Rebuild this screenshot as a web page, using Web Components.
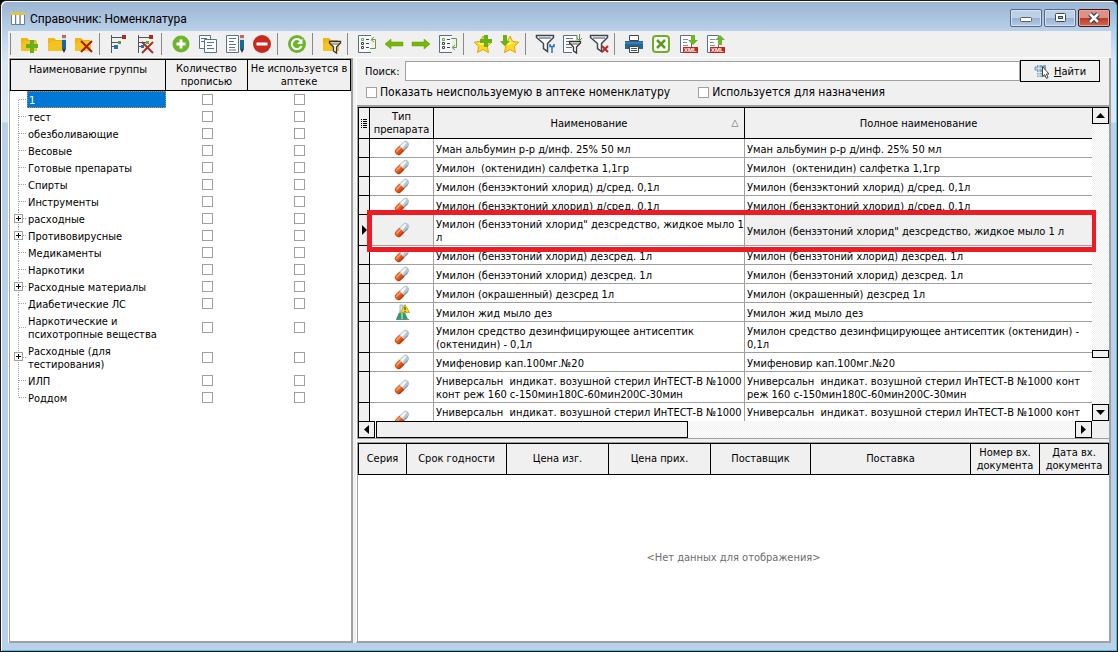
<!DOCTYPE html>
<html lang="ru">
<head>
<meta charset="utf-8">
<title>Справочник: Номенклатура</title>
<style>
  html, body { margin: 0; height: 100%; }
  body { font: 11px/13px "DejaVu Sans Condensed", "DejaVu Sans", sans-serif; color: #000; background: #000; }
</style>
</head>
<body>
<app-window>
  <title-bar slot="title">Справочник: Номенклатура</title-bar>
  <tool-bar slot="tools"></tool-bar>
  <group-tree slot="side"></group-tree>
  <search-panel slot="main"></search-panel>
  <drug-grid slot="main"></drug-grid>
  <lot-grid slot="main">&lt;Нет данных для отображения&gt;</lot-grid>
</app-window>

<script>
const define = (name, html, setup) => customElements.define(name, class extends HTMLElement {
  constructor() {
    super();
    this.attachShadow({ mode: 'open' });
    const t = document.createElement('template');
    t.innerHTML = typeof html === 'function' ? html(this) : html;
    this.shadowRoot.append(t.content.cloneNode(true));
    if (setup) setup(this);
  }
});

/* ---------- toolbar glyphs, 24 x 22 ---------- */
const svg = (body, w = 24, h = 22) =>
  `<svg width="${w}" height="${h}" viewBox="0 0 ${w} ${h}" aria-hidden="true">${body}</svg>`;
const folder = '<path d="M3 5h6l2 2h7v2H7l-1 9H3z" fill="#e9b010"/><path d="M6 8h13v10H3V10h3z" fill="#f2c321"/><path d="M3 5h6l2 3H6v2H3z" fill="#edb716"/>';
const pencil = (x = 17) => `<path d="M${x} 2h4v3h-4z" fill="#c0685c"/><path d="M${x} 5h4v2h-4z" fill="#d8dde0"/><path d="M${x} 7h4v9h-4z" fill="#1d64a0"/><path d="M${x} 16h4l-2 4z" fill="#23384a"/>`;
const sheet = (x, y, w, h) => `<path d="M${x}.5 ${y}.5h${w}v${h}h-${w}z" fill="#fff" stroke="#5a7485"/>`;
const funnel = (s = '#3c4650') => `<path d="M3.500 2.500h17v2l-6 6v8l-4-3v-5l-7-6z" fill="#fff" stroke="${s}" stroke-width="1.500"/><path d="M6 5h12" stroke="${s}"/>`;
const smallFunnel = '<path d="M9.500 8.500h11v1.500l-4 4v6l-3-2v-4l-4-4z" fill="#fff" stroke="#333" stroke-width="1.300"/><path d="M11 11h8" stroke="#555"/>';
const listBox = '<path d="M16 2.500H3.500v17H16" fill="#f7f9fa" stroke="#54708a"/><path d="M6.500 5.500h2v2h-2z" fill="none" stroke="#6fae2a"/><path d="M6.500 9.500h2v2h-2zM6.500 13.500h2v2h-2z" fill="none" stroke="#444"/><path d="M11 6.500h3M11 10.500h3M11 14.500h3" stroke="#444"/>';
const star = '<path d="M12 3l2.600 5.400 6.200.800-4.500 4.200 1.200 6.200-5.500-3-5.500 3 1.200-6.200L3.200 9.200l6.200-.800z" fill="#ffd91c" stroke="#e0a414"/><path d="M12 5l1.500 4.500 4.500.500-8 2-4-2 4.500-.500z" fill="#fff27a"/>';
const xml = '<path d="M4.500 2.500h11v17h-11z" fill="#fff" stroke="#54708a"/><path d="M7 6.500h5M7 9.500h4M7 12.500h5" stroke="#7d909c"/><path d="M7 14h15v6H7z" fill="#c0271c"/><text x="8" y="19" font-family="Liberation Sans, sans-serif" font-weight="bold" font-size="6" fill="#fff">XML</text>';
const tree = '<path d="M4.500 2v18M4.500 4.500h11M4.500 13.500h4M4.500 9.500h8" fill="none" stroke="#4c565e"/><path d="M15 2h4v4h-4z" fill="#b5281f"/>';
const glyphs = {
  'Добавить группу': folder + '<path d="M12 7h4v4h4v4h-4v5h-4v-5H8v-4h4z" fill="#69b01e"/>',
  'Изменить группу': folder + pencil(17),
  'Удалить группу': folder + '<path d="M9 8l11 11M20 8L9 19" stroke="#a51d16" stroke-width="2"/>',
  '-1': 0,
  'Добавить в дерево': tree + '<path d="M7 12h4v4H7z" fill="#2d6fa8"/><path d="M11 8h3v3h-3z" fill="#5d9a3a"/>',
  'Удалить из дерева': tree + '<path d="M12 8h3v3h-3z" fill="#69b01e"/><path d="M7 12h3v3H7z" fill="#2d6fa8"/><path d="M8 9l11 11M19 9L8 20" stroke="#a5302a" stroke-width="2"/>',
  '-2': 0,
  'Добавить': '<circle cx="12" cy="11" r="8.500" fill="#6db52b"/><path d="M12 6.500v9M7.500 11h9" stroke="#fff" stroke-width="3"/>',
  'Копировать': sheet(3, 2, 11, 13) + '<path d="M5 5.500h6M5 8.500h3" stroke="#5a7485"/>' + sheet(8, 6, 12, 13) + '<path d="M11 9.500h7M11 12.500h5M11 15.500h7" stroke="#5a7485"/>',
  'Изменить': '<path d="M3.500 2.500h12v17h-12z" fill="#fff" stroke="#5a7485"/><path d="M6 5.500h7M6 8.500h5M6 11.500h7M6 14.500h6M6 17h7" stroke="#66727a"/>' + pencil(17),
  'Удалить': '<circle cx="12" cy="11" r="9" fill="#c9281e"/><path d="M6.500 11h11" stroke="#fff" stroke-width="3"/>',
  '-3': 0,
  'Обновить': '<circle cx="12" cy="11" r="9" fill="#6db52b"/><path d="M15.800 8A5 5 0 1 0 16.500 13" fill="none" stroke="#fff" stroke-width="2"/><path d="M17.500 5.500v5.500H12z" fill="#fff"/>',
  '-4': 0,
  'Фильтр групп': folder + smallFunnel,
  '-5': 0,
  'Первая группа': listBox + '<path d="M15 15.500h5.500v-9H17M19 4l-3 2.500L19 9" fill="none" stroke="#6a9a3a"/>',
  'Назад': '<path d="M3 11l6-5v3h12v4H9v3z" fill="#76b900" stroke="#5c9a10" stroke-width=".500"/>',
  'Вперёд': '<path d="M21 11l-6-5v3H3v4h12v3z" fill="#76b900" stroke="#5c9a10" stroke-width=".500"/>',
  'Последняя группа': listBox + '<path d="M15 5.500h5.500v9H17M19 12l-3 2.500 3 2.500" fill="none" stroke="#6a9a3a"/>',
  '-6': 0,
  'В избранное': star + '<path d="M13 2h4v4h4v4h-4v4h-4v-4H9V6h4z" fill="#69b01e"/>',
  'Избранное': star + '<path d="M5 2h4v6h3l-5 5-5-5h3z" fill="#69b01e"/>',
  '-7': 0,
  'Настроить фильтр': funnel() + '<path d="M17 11v2.500h4V11M19 13v7" fill="none" stroke="#2d6fa8" stroke-width="1.500"/>',
  'Фильтр списка': '<path d="M17 7V2.500H3.500v17H12" fill="#fff" stroke="#54708a"/><path d="M6 5.500h7M6 8.500h4M6 11.500h4M6 14.500h6" stroke="#66727a"/><path d="M19.500 1v6M17 5l2.500 2.500L22 5" fill="none" stroke="#5d9a3a"/>' + smallFunnel,
  'Снять фильтр': funnel() + '<path d="M15 13l6 6M21 13l-6 6" stroke="#c0271c" stroke-width="2"/>',
  '-8': 0,
  'Печать': '<path d="M7.500 2.500h9v5h-9z" fill="#fff" stroke="#444"/><path d="M3 8h18v8H3z" fill="#20679e"/><path d="M3 10h18" stroke="#5d94bd"/><path d="M7.500 13.500h9v6h-9z" fill="#fff" stroke="#444"/><path d="M9 15.500h6M9 17.500h6" stroke="#555"/>',
  'Экспорт в Excel': '<rect x="4" y="3" width="16" height="16" rx="3" fill="#fff" stroke="#6fae2a" stroke-width="2"/><path d="M8 7l8 8M16 7l-8 8" stroke="#5d9a1e" stroke-width="2.500"/>',
  'Загрузить XML': xml + '<path d="M15 2h4v5h3l-5 5-5-5h3z" fill="#6db52b"/>',
  'Выгрузить XML': xml + '<path d="M15 12V7h-3l5-5 5 5h-3v5z" fill="#6db52b"/>'
};

define('tool-button', el => `
<style>
  :host { display: block; flex: 0 0 27px; }
  button { display: flex; align-items: center; justify-content: center; width: 100%; height: 26px; padding: 0; border: 0; background: none; }
  svg { display: block; }
</style>
<button type="button" aria-label="${el.getAttribute('label')}">${svg(glyphs[el.getAttribute('label')])}</button>`);

define('tool-bar', `
<style>
  :host { display: flex; align-items: center; height: 26px; background: #f0f0f0; }
  i { flex: 0 0 8px; height: 22px; background: linear-gradient(#8a8a8a, #8a8a8a) 2px 0 / 1px 22px no-repeat; }
</style>
<i></i>${Object.keys(glyphs).map(k => k[0] === '-' ? '<i></i>' : `<tool-button label="${k}"></tool-button>`).join('')}`);

/* ---------- window frame ---------- */
define('app-window', `
<style>
  :host { display: flex; flex-direction: column; box-sizing: border-box; height: 100vh; padding: 0 6px 8px 7px;
    border: 1px solid #1b1b1f; border-bottom-color: #000; border-radius: 6px 6px 0 0; overflow: hidden;
    box-shadow: inset 1px 1px #fff, inset -1px -1px #22d3ee;
    background: linear-gradient(#99b4d1, #b9d1ea 30px, #d8e6f5 60px, #dce8f6 121px, #b9d1ea 122px); }
  main { flex: 1; min-height: 0; display: flex; background: #f0f0f0; border-left: 1px solid #fff; border-top: 1px solid #fff; }
  .side { flex: 0 0 344px; display: flex; }
  .main { flex: 1; min-width: 0; display: flex; flex-direction: column; margin-left: 3px; border-right: 2px solid #a0a0a0; border-bottom: 2px solid #a0a0a0; border-left: 1px solid #fff; }
  ::slotted(drug-grid) { flex: 334 1 0; min-height: 0; }
  ::slotted(lot-grid) { flex: 200 1 0; min-height: 0; }
  ::slotted(group-tree) { flex: 1; }
</style>
<slot name="title"></slot>
<slot name="tools"></slot>
<main><div class="side"><slot name="side"></slot></div><div class="main"><slot name="main"></slot></div></main>`);

define('title-bar', `
<style>
  :host { display: flex; align-items: center; height: 30px; font: 12px/16px Roboto, "Open Sans", sans-serif; }
  h1 { flex: 1; margin: 6px 0 0 5px; font: inherit; }
  svg { display: block; }
  .app { margin: 6px 0 0 3px; }
  nav { display: flex; gap: 2px; margin: 4px 1px 0 0; }
  button { width: 32px; height: 18px; padding: 0; display: flex; justify-content: center; align-items: center;
    border: 1px solid #56688a; border-radius: 2px; box-shadow: inset 0 0 0 1px #d3e1f0;
    background: linear-gradient(#bdd0e6 50%, #97b1d0 50%, #b4cbe4); }
  .close { border-color: #43141c; box-shadow: inset 0 0 0 1px #e0a89c; background: linear-gradient(#dd9186 50%, #b83a26 50%, #cf6a50); }
</style>
<svg class="app" width="14" height="14" viewBox="0 0 14 14" aria-hidden="true"><path d="M1 3h3v10H1zM5.500 3h3v10h-3zM10 3h3v10h-3z" fill="#fff"/><path d="M.500 3v9.500h4V3M4.500 12.500h4.500V3M9 12.500h4.500V3" fill="none" stroke="#6d7d8c"/><path d="M0 0h4v3H0zM5 0h4v3H5zM10 0h4v3h-4z" fill="#e9c62c"/></svg>
<h1><slot></slot></h1>
<nav>
  <button type="button" aria-label="Свернуть"><svg width="16" height="12"><rect x="2.500" y="5.500" width="11" height="4" rx="1" fill="#fff" stroke="#555b70"/></svg></button>
  <button type="button" aria-label="Развернуть"><svg width="16" height="12"><rect x="3.500" y="1.500" width="10" height="8" rx="1" fill="#fff" stroke="#3f4660"/><rect x="6.500" y="4.500" width="4" height="2" fill="#9fb7d6" stroke="#3f4660"/></svg></button>
  <button type="button" class="close" aria-label="Закрыть"><svg width="16" height="12"><path d="M4 2l8 8M12 2l-8 8" stroke="#3f3644" stroke-width="5"/><path d="M4 2l8 8M12 2l-8 8" stroke="#fff" stroke-width="2.500"/></svg></button>
</nav>`);

/* ---------- group tree ---------- */
const groups = ['1', 'тест', 'обезболивающие', 'Весовые', 'Готовые препараты', 'Спирты', 'Инструменты', '+расходные',
  '+Противовирусные', 'Медикаменты', 'Наркотики', '+Расходные материалы', 'Диабетические ЛС',
  'Наркотические и\nпсихотропные вещества', '+Расходные (для\nтестирования)', 'ИЛП', 'Роддом'];
const dots = 'repeating-linear-gradient(#a0a0a0 0 1px, transparent 1px 2px)';

define('group-tree', `
<style>
  :host { display: block; background: #fff; border: 1px solid #a0a0a0; border-width: 1px 1px 2px 1px; box-shadow: 1px 0 #a0a0a0; margin-right: 1px; overflow: hidden; }
  table { border-collapse: separate; border-spacing: 0; table-layout: fixed; width: 100%; }
  th { height: 32px; padding: 0; background: #f0f0f0; border: 1px solid #000; border-left: 0; font-weight: normal; text-align: center; vertical-align: middle; box-sizing: border-box; }
  th:first-child { border-left: 1px solid #000; vertical-align: top; padding-top: 3px; }
  td { padding: 0; text-align: center; vertical-align: middle; }
  td:first-child { text-align: left; }
  .node { display: flex; align-items: stretch; min-height: 17px; }
  .rail { position: relative; flex: 0 0 17px; background: ${dots} 8px 0 / 1px 100% no-repeat, repeating-linear-gradient(90deg, #a0a0a0 0 1px, transparent 1px 2px) 9px 50% / 8px 1px no-repeat; }
  .first .rail { background-size: 1px 50%, 8px 1px; background-position: 8px 100%, 9px 50%; }
  .last .rail { background-size: 1px 50%, 8px 1px; }
  .label { flex: 1; padding: 3px 1px 1px; white-space: pre; }
  .first .label { background: #0078d7; color: #fff; padding: 3px 2px 1px; outline: 1px dotted #e08a3c; outline-offset: -1px; }
  .plus { position: absolute; left: 4px; top: calc(50% - 5px); width: 9px; height: 9px; box-sizing: border-box; padding: 0; border: 1px solid #a0a0a0;
    background: linear-gradient(#000,#000) 50% 50% / 5px 1px no-repeat, linear-gradient(#000,#000) 50% 50% / 1px 5px no-repeat, #fff; }
  input { appearance: none; display: block; box-sizing: border-box; width: 11px; height: 11px; margin: 0 auto; border: 1px solid #a0a0a0; background: #fff; }
</style>
<table>
  <colgroup><col style="width:156px"><col style="width:82px"><col></colgroup>
  <thead><tr><th>Наименование группы</th><th>Количество<br>прописью</th><th>Не используется в<br>аптеке</th></tr></thead>
  <tbody>${groups.map((g, i) => {
    const name = g.replace('+', '');
    return `<tr><td><div class="node ${i === 0 ? 'first' : i === groups.length - 1 ? 'last' : ''}"><span class="rail">${g[0] === '+' ? `<button class="plus" type="button" aria-label="Развернуть"></button>` : ''}</span><span class="label">${name}</span></div></td>` +
      `<td><input type="checkbox" aria-label="Количество прописью"></td><td><input type="checkbox" aria-label="Не используется в аптеке"></td></tr>`;
  }).join('')}</tbody>
</table>`);

/* ---------- search ---------- */
define('search-panel', `
<style>
  :host { display: block; box-sizing: border-box; height: 47px; padding-top: 1px; background: #f0f0f0; }
  .row { display: flex; align-items: center; height: 24px; padding: 0 9px 0 8px; }
  .row > label { flex: 0 0 40px; }
  .row input { flex: 1; min-width: 0; box-sizing: border-box; height: 20px; border: 1px solid #a0a0a0; background: #fff; padding: 0 3px; font: inherit; }
  button { display: flex; align-items: center; justify-content: center; gap: 4px; width: 80px; height: 22px; padding: 0; border: 1px solid #000; background: #f0f0f0; font: inherit; color: #000; }
  svg { display: block; }
  .opts { display: flex; gap: 28px; padding: 1px 9px; height: 16px; align-items: center; font-size: 12px; line-height: 15px; }
  .opts label { display: flex; align-items: center; gap: 3px; }
  .opts input { appearance: none; width: 11px; height: 11px; margin: 0; box-sizing: border-box; border: 1px solid #a0a0a0; background: #fff; }
</style>
<div class="row"><label for="q">Поиск:</label><input id="q" type="text"><button type="button"><svg width="16" height="16" viewBox="0 0 16 16" aria-hidden="true"><path d="M3 2h9v12H3z" fill="#86a9bf"/><path d="M1 4h10v3H1z" fill="#c3d8e4" stroke="#6e93ab"/><path d="M3 9.500h9M3 12h9M5 2v12M8.500 2v12" stroke="#dbe8ef"/><path d="M8.500 3.500v10l2.200-2 1.800 4 1.500-1-1.500-3.500h2.500z" fill="#fff" stroke="#444"/></svg><span><u>Н</u>айти</span></button></div>
<div class="opts"><label><input type="checkbox">Показать неиспользуемую в аптеке номенклатуру</label><label><input type="checkbox">Используется для назначения</label></div>`);

/* ---------- scroll bars ---------- */
define('scroll-bar', el => {
  const v = el.hasAttribute('vertical');
  return `
<style>
  :host { display: flex; flex-direction: ${v ? 'column' : 'row'}; box-sizing: border-box;
    background: repeating-conic-gradient(#fff 0 25%, #efefef 0 50%) 0 0 / 2px 2px; }
  button { flex: 0 0 17px; ${v ? 'width' : 'height'}: 17px; box-sizing: border-box; padding: 0; border: 1px solid #000; background: #f0f0f0; display: flex; align-items: center; justify-content: center; }
  .track { flex: 1; display: flex; flex-direction: ${v ? 'column' : 'row'}; }
  .before { flex: ${v ? 226 : 1} 1 0; }
  .after { flex: ${v ? 46 : 388} 1 0; }
  .thumb { box-sizing: border-box; border: 1px solid #000; background: #f0f0f0; ${v ? 'flex: 0 0 8px; width: 17px' : 'flex: 311 1 0; height: 17px'}; }
  svg { display: block; }
</style>
<button type="button" aria-label="Назад"><svg width="9" height="9"><path d="${v ? 'M0 7l4.500-5 4.500 5z' : 'M7 0v9L2 4.500z'}"/></svg></button>
<div class="track"><span class="before"></span><span class="thumb"></span><span class="after"></span></div>
<button type="button" aria-label="Вперёд"><svg width="9" height="9"><path d="${v ? 'M0 2l4.500 5 4.500-5z' : 'M2 0v9l5-4.500z'}"/></svg></button>`;
});

/* ---------- nomenclature grid ---------- */
define('pill-icon', `
<style>:host { display: block; width: 16px; height: 16px; margin: 0 auto; white-space: normal; } svg { display: block; }</style>
<svg width="16" height="16" viewBox="0 0 16 16" aria-hidden="true"><g transform="rotate(-45 8 8)">
<path d="M8 4.500H3a3.500 3.500 0 0 0 0 7h5z" fill="#e2551a"/><path d="M8 5.500H3a2 2 0 0 0-2 2h7z" fill="#f79a63"/><path d="M8 10H0A3 3 0 0 0 3 11.500h5z" fill="#b63a10"/>
<path d="M8 4.500h5a3.500 3.500 0 0 1 0 7H8z" fill="#b9c6cc"/><path d="M8 5.500h5a2 2 0 0 1 2 2L8 8.500z" fill="#f4fafc"/><path d="M8 11h5" stroke="#7e9098"/></g></svg>`);

define('flask-icon', `
<style>:host { display: block; width: 16px; height: 16px; margin: 0 auto; white-space: normal; } svg { display: block; }</style>
<svg width="16" height="16" viewBox="0 0 16 16" aria-hidden="true"><path d="M6 1h3v5l4.500 9H2.500L6 7z" fill="#dce8ec" stroke="#8a9ba3" stroke-width=".700"/><path d="M5 9h6l2.500 6H2.500z" fill="#2e9a6a"/><path d="M7 9h2v6H7z" fill="#7ad0a4"/><path d="M2 15.500h13" stroke="#6d8791"/><path d="M11 .500l4.500 8h-9z" fill="#f5d820" stroke="#a88c10" stroke-width=".700"/><path d="M11 3v3M11 7v1" stroke="#222"/></svg>`);

const drugs = [
  ['Уман альбумин р-р д/инф. 25% 50 мл'],
  ['Умилон  (октенидин) салфетка 1,1гр'],
  ['Умилон (бензэктоний хлорид) д/сред. 0,1л'],
  ['Умилон (бензэктоний хлорид) д/сред. 0,1л'],
  ['Умилон (бензэтоний хлорид" дезсредство, жидкое мыло 1\nл', 'Умилон (бензэтоний хлорид" дезсредство, жидкое мыло 1 л'],
  ['Умилон (бензэтоний хлорид) дезсред. 1л'],
  ['Умилон (бензэтоний хлорид) дезсред. 1л'],
  ['Умилон (окрашенный) дезсред 1л'],
  ['Умилон жид мыло дез'],
  ['Умилон средство дезинфицирующее антисептик\n(октенидин) - 0,1л', 'Умилон средство дезинфицирующее антисептик (октенидин) -\n0,1л'],
  ['Умифеновир кап.100мг.№20'],
  ['Универсальн  индикат. возушной стерил ИнТЕСТ-В №1000\nконт реж 160 с-150мин180С-60мин200С-30мин', 'Универсальн  индикат. возушной стерил ИнТЕСТ-В №1000 конт\nреж 160 с-150мин180С-60мин200С-30мин'],
  ['Универсальн  индикат. возушной стерил ИнТЕСТ-В №1000', 'Универсальн  индикат. возушной стерил ИнТЕСТ-В №1000 конт']
];

define('drug-grid', `
<style>
  :host { position: relative; display: grid; box-sizing: border-box; grid-template: minmax(0, 1fr) 17px / minmax(0, 1fr) 17px; background: #f0f0f0; border: 1px solid #a0a0a0; border-right: 0; border-top-width: 2px; }
  .view { overflow: hidden; border-top: 1px solid #000; border-left: 1px solid #000; background: #fff; margin-right: -1px; }
  scroll-bar[vertical] { position: relative; }
  table { border-collapse: separate; border-spacing: 0; table-layout: fixed; width: 100%; }
  th, td { box-sizing: border-box; padding: 0; border: 0 solid #a0a0a0; border-width: 0 1px 1px 0; }
  th { height: 31px; background: #f0f0f0; border-color: #000; font-weight: normal; }
  td { height: 19px; padding: 3px 0 1px 2px; vertical-align: middle; white-space: pre; overflow: hidden; }
  td:first-child { background: #f0f0f0; border-color: #000; padding: 0; }
  td:nth-child(2) { padding: 1px 0; }
  .current td { background: #f0f0f0; }
  .current td.focus { background: #fff; }
  .partial td { height: 31px; vertical-align: top; }
  .partial td:nth-child(2) { vertical-align: middle; }
  svg { display: block; }
  .sort { position: relative; }
  .sort svg { position: absolute; right: 5px; top: 11px; }
  .mark { position: absolute; left: 9px; right: 13px; top: 103px; height: 42px; box-sizing: border-box; border: 5px solid #ed1c24; border-right-width: 4px; pointer-events: none; }
</style>
<div class="view"><table>
  <colgroup><col style="width:11px"><col style="width:64px"><col style="width:311px"><col></colgroup>
  <thead><tr><th aria-label="Столбцы"><svg width="9" height="11" viewBox="0 0 9 11"><path d="M2 1.500h1m1 0h4M2 3.500h1m1 0h4M2 5.500h1m1 0h4M2 7.500h1m1 0h4M2 9.500h1m1 0h4" stroke="#000"/></svg></th><th>Тип<br>препарата</th><th class="sort">Наименование<svg width="8" height="9" viewBox="0 0 8 9"><path d="M4 1L.800 7.500h6.400z" fill="none" stroke="#a0a0a0"/></svg></th><th>Полное наименование</th></tr></thead>
  <tbody>${drugs.map(([a, b], i) => `<tr class="${i === 4 ? 'current' : i === drugs.length - 1 ? 'partial' : ''}"><td>${i === 4 ? '<svg width="9" height="10"><path d="M3 0v10l5-5z"/></svg>' : ''}</td><td>${i === 8 ? '<flask-icon></flask-icon>' : '<pill-icon></pill-icon>'}</td><td${i === 4 ? ' class="focus"' : ''}>${a}</td><td>${b || a}</td></tr>`).join('')}</tbody>
</table></div>
<scroll-bar vertical></scroll-bar>
<scroll-bar></scroll-bar>
<div class="mark"></div>`);

/* ---------- lots ---------- */
define('lot-grid', `
<style>
  :host { display: flex; flex-direction: column; margin-top: 3px; background: #fff; border: 0 solid #a0a0a0; border-width: 1px 0 0 1px; }
  table { border-collapse: separate; border-spacing: 0; table-layout: fixed; width: 100%; border-left: 1px solid #000; }
  th { box-sizing: border-box; height: 32px; padding: 0; background: #f0f0f0; border: 1px solid #000; border-left: 0; font-weight: normal; }
  .empty { flex: 1; display: flex; align-items: center; justify-content: center; color: #6d6d6d; }
</style>
<table>
  <colgroup><col style="width:48px"><col style="width:100px"><col style="width:102px"><col style="width:102px"><col style="width:100px"><col><col style="width:69px"><col style="width:69px"></colgroup>
  <thead><tr><th>Серия</th><th>Срок годности</th><th>Цена изг.</th><th>Цена прих.</th><th>Поставщик</th><th>Поставка</th><th>Номер вх.<br>документа</th><th>Дата вх.<br>документа</th></tr></thead>
</table>
<div class="empty"><slot></slot></div>`);
</script>
</body>
</html>
